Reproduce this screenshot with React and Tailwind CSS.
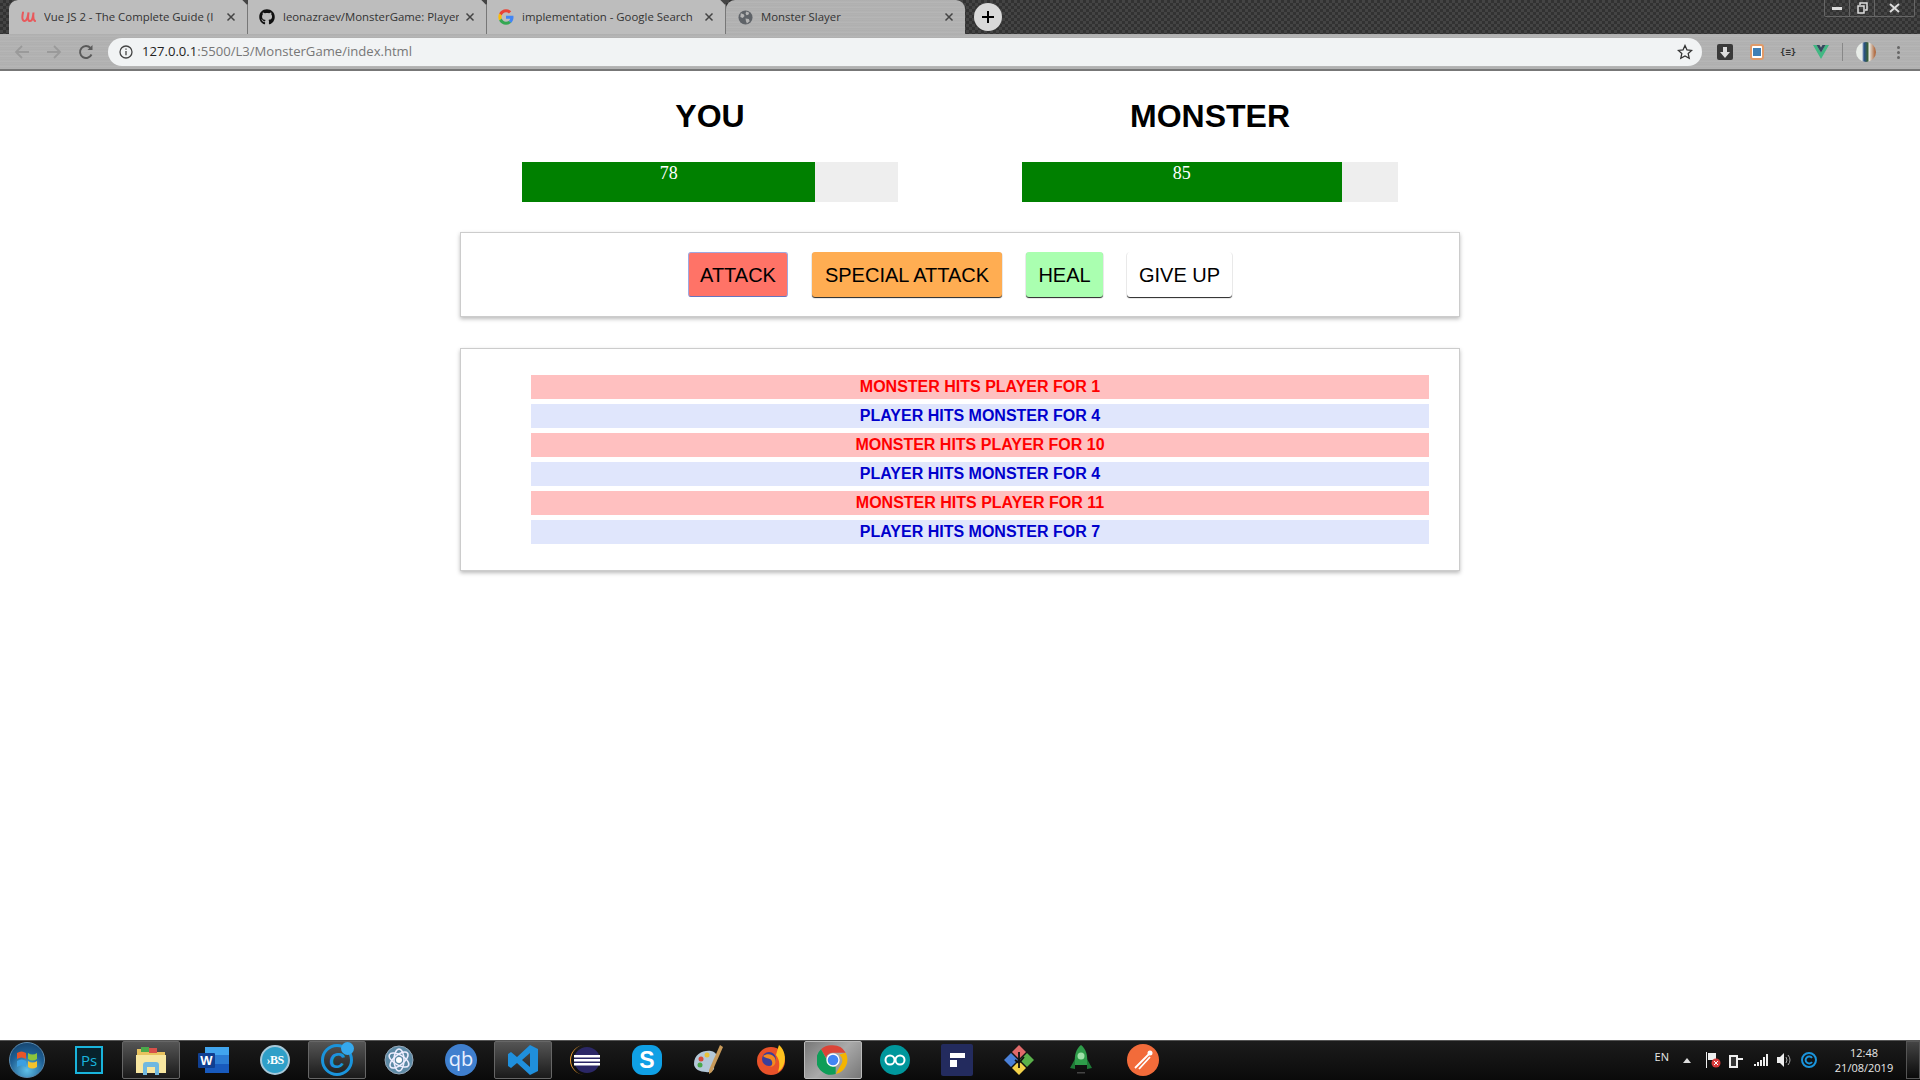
import React from "react";
import { FaGithub } from "react-icons/fa";

const metal = "bg-[repeating-linear-gradient(180deg,#b6b6b6_0px,#a9a9a9_1px,#bcbcbc_2px,#afafaf_3px,#b3b3b3_5px)]";

function Udemy() {
  return <svg width="16" height="16" viewBox="0 0 16 16"><path d="M3 3.500C2 8 2 12 4.500 12S8 7 8.500 3.500C8 8 7.500 12 10 12s3-4 3.500-8.500C13 8 13 11 15 12" fill="none" stroke="#e8595c" strokeWidth="2" strokeLinecap="round" /></svg>;
}
function Google() {
  return (
    <svg width="16" height="16" viewBox="0 0 48 48">
      <path fill="#EA4335" d="M24 10c3.5 0 6.600 1.200 9 3.500l6.700-6.700C35.600 3 30.200 1 24 1 15 1 7.200 6.200 3.400 13.700l7.800 6C13 14.100 18 10 24 10z" />
      <path fill="#4285F4" d="M46.500 24.500c0-1.600-.2-3.100-.4-4.500H24v9h12.700c-.6 2.900-2.200 5.400-4.700 7l7.300 5.700c4.300-4 7.200-9.800 7.200-17.200z" />
      <path fill="#FBBC05" d="M11.200 28.300A14 14 0 0 1 10.500 24c0-1.500.3-3 .7-4.300l-7.800-6A23 23 0 0 0 1 24c0 3.700.9 7.200 2.400 10.300l7.800-6z" />
      <path fill="#34A853" d="M24 47c6.200 0 11.400-2 15.300-5.500L32 35.800c-2 1.400-4.700 2.200-8 2.200-6 0-11-4.100-12.800-9.700l-7.800 6C7.200 41.800 15 47 24 47z" />
    </svg>
  );
}
function Globe() {
  return (
    <svg width="15" height="15" viewBox="0 0 16 16">
      <circle cx="8" cy="8" r="7.500" fill="#5f6368" />
      <path d="M3 3.500l3 1 1 2-2 2-2.500-1zM9 1.500l3 1.500-1 2-2 .5-1-2zM8 9l3.500.5 1 2.500-3 2.500-1-2.500z" fill="#b4b4b4" />
    </svg>
  );
}
function CloseX() {
  return <svg width="10" height="10" viewBox="0 0 10 10"><path d="M1.500 1.500l7 7M8.500 1.500l-7 7" stroke="#444" strokeWidth="1.500" /></svg>;
}

function Tab({ icon, title, active }) {
  return (
    <div className={`relative flex h-[34px] w-[239px] shrink-0 items-center pl-[11px] pr-[8px] ${active ? "rounded-t-[9px]" : "border-r border-[#777] bg-[#bdbdbd] first:rounded-tl-[9px]"}`}>
      <div className="flex w-[16px] shrink-0 justify-center">{icon}</div>
      <div className="ml-[8px] w-[176px] overflow-hidden whitespace-nowrap text-[11.4px] text-[#333] [font-family:'Open_Sans',sans-serif]">{title}</div>
      <div className="ml-auto flex w-[16px] justify-center"><CloseX /></div>
      {!active && <div className="absolute right-[-4px] top-[-5px] h-[8px] w-[8px] rotate-45 bg-[#444]" />}
    </div>
  );
}

function TabStrip() {
  return (
    <div className="flex h-[34px] items-start bg-[#3a3a3a] bg-[repeating-conic-gradient(#323232_0_25%,#444444_0_50%)] bg-[length:6px_6px] pl-[9px]">
      <Tab icon={<Udemy />} title="Vue JS 2 - The Complete Guide (I" />
      <Tab icon={<FaGithub className="text-[16px] text-[#111]" />} title="leonazraev/MonsterGame: Player" />
      <Tab icon={<Google />} title="implementation - Google Search" />
      <div className={`w-[239px] rounded-t-[9px] ${metal}`}><Tab active icon={<Globe />} title="Monster Slayer" /></div>
      <div className="ml-[9px] mt-[3px] flex h-[28px] w-[28px] items-center justify-center rounded-full bg-[#d9d9d9]">
        <svg width="14" height="14" viewBox="0 0 14 14"><path d="M7 1v12M1 7h12" stroke="#000" strokeWidth="2" /></svg>
      </div>
      <div className="ml-auto mr-[5px] flex h-[17px] w-[91px] items-center rounded-b-[2px] border border-t-0 border-[#666] text-[#ddd]">
        <div className="flex h-full w-[25px] items-center justify-center border-r border-[#666]"><div className="h-[3px] w-[10px] bg-[#ddd]" /></div>
        <div className="flex h-full w-[25px] items-center justify-center border-r border-[#666]">
          <svg width="11" height="12" viewBox="0 0 11 12" fill="none" stroke="#ddd" strokeWidth="1.500"><rect x="1" y="4" width="6" height="7" /><path d="M3 3V1h7v7H8" /></svg>
        </div>
        <div className="flex h-full flex-1 items-center justify-center">
          <svg width="11" height="10" viewBox="0 0 11 10"><path d="M1 1l9 8M10 1L1 9" stroke="#ddd" strokeWidth="2" /></svg>
        </div>
      </div>
    </div>
  );
}

function NavButtons() {
  return (
    <div className="flex w-[108px] shrink-0 items-center pl-[14px]">
      <svg width="16" height="16" viewBox="0 0 16 16" fill="none" stroke="#9a9a9a" strokeWidth="1.800"><path d="M15 8H2M8 2L2 8l6 6" /></svg>
      <svg className="ml-[16px]" width="16" height="16" viewBox="0 0 16 16" fill="none" stroke="#9a9a9a" strokeWidth="1.800"><path d="M1 8h13M8 2l6 6-6 6" /></svg>
      <svg className="ml-[16px]" width="16" height="16" viewBox="0 0 16 16" fill="none" stroke="#5a5a5a" strokeWidth="1.900"><path d="M13.500 10.500A6 6 0 1 1 12.500 4" /><path d="M14.500 1v5h-5" fill="#5a5a5a" stroke="none" /></svg>
    </div>
  );
}

function Toolbar() {
  return (
    <div className={`flex h-[37px] items-center border-b-2 border-[#777] pt-[1px] ${metal}`}>
      <NavButtons />
      <div className="flex h-[28px] w-[1594px] items-center rounded-full bg-[#f1f3f4] pl-[11px] pr-[9px]">
        <svg width="14" height="14" viewBox="0 0 14 14" fill="none" stroke="#444" strokeWidth="1.300"><circle cx="7" cy="7" r="6" /><path d="M7 6v4.200M7 3.500v1.300" /></svg>
        <div className="ml-[9px] whitespace-nowrap text-[13.100px] text-[#777] [font-family:'Open_Sans',sans-serif]"><span className="text-[#222]">127.0.0.1</span>:5500/L3/MonsterGame/index.html</div>
        <svg className="ml-auto" width="16" height="16" viewBox="0 0 16 16" fill="none" stroke="#333" strokeWidth="1.300"><path d="M8 1.500l2 4.400 4.700.5-3.500 3.200 1 4.700L8 11.900l-4.200 2.400 1-4.700L1.300 6.400 6 5.900z" /></svg>
      </div>
      <div className="flex flex-1 items-center pl-[15px]">
        <div className="flex h-[16px] w-[16px] items-center justify-center rounded-[2px] bg-[#3a3a3a]">
          <svg width="10" height="11" viewBox="0 0 10 11"><path d="M3 0h4v5h3l-5 6-5-6h3z" fill="#ddd" /></svg>
        </div>
        <div className="ml-[17px] flex h-[16px] w-[14px] items-center justify-center rounded-[3px] border-2 border-[#e09a68] bg-white">
          <div className="h-[8px] w-[8px] bg-[#3f7fb5]" />
        </div>
        <div className="ml-[16px] w-[15px] text-center text-[9px] font-bold leading-none text-[#333] [font-family:'DejaVu_Sans_Mono',monospace]">{"{≡}"}</div>
        <svg className="ml-[18px]" width="16" height="14" viewBox="0 0 16 14"><path d="M0 0h3.500L8 7.500 12.500 0H16L8 14z" fill="#41b883" /><path d="M3.500 0h3L8 2.500 9.500 0h3L8 7.500z" fill="#35495e" /></svg>
        <div className="ml-[13px] h-[18px] w-px bg-[#888]" />
        <div className="ml-[13px] h-[20px] w-[20px] overflow-hidden rounded-full bg-[linear-gradient(90deg,#e8ede8_0%,#e8ede8_30%,#27508a_40%,#3a6030_60%,#e8ede8_65%,#b06a40_95%)]" />
        <div className="ml-[21px] flex flex-col gap-[2px]">
          <div className="h-[3px] w-[3px] rounded-full bg-[#666]" />
          <div className="h-[3px] w-[3px] rounded-full bg-[#666]" />
          <div className="h-[3px] w-[3px] rounded-full bg-[#666]" />
        </div>
      </div>
    </div>
  );
}

function Fighter({ name, value }) {
  return (
    <div className="flex w-[500px] flex-col items-center">
      <h1 className="text-[32px] font-bold leading-[37px] text-black">{name}</h1>
      <div className="mt-[27px] h-[40px] w-[376px] bg-[#eeeeee]">
        <div className="h-full bg-[#008000] text-center text-[18px] leading-[22px] text-white [font-family:'Liberation_Serif',serif]" style={{ width: `${value}%` }}>{value}</div>
      </div>
    </div>
  );
}

const card = "w-[1000px] border border-[#cccccc] bg-white shadow-[0_2px_4px_#bbbbbb]";

function GameButton({ label, className }) {
  return <button className={`h-[45px] rounded-[3px] text-[20px] text-black ${className}`}>{label}</button>;
}

const log = [
  ["MONSTER HITS PLAYER FOR 1", true],
  ["PLAYER HITS MONSTER FOR 4", false],
  ["MONSTER HITS PLAYER FOR 10", true],
  ["PLAYER HITS MONSTER FOR 4", false],
  ["MONSTER HITS PLAYER FOR 11", true],
  ["PLAYER HITS MONSTER FOR 7", false],
];

function Game() {
  return (
    <main className="flex flex-1 flex-col items-center bg-white pt-[27px] [font-family:'Liberation_Sans',Arial,sans-serif]">
      <div className="flex w-[1000px]">
        <Fighter name="YOU" value={78} />
        <Fighter name="MONSTER" value={85} />
      </div>
      <div className={`mt-[30px] flex h-[85px] items-start justify-center gap-[24px] pt-[19px] ${card}`}>
        <GameButton label="ATTACK" className="w-[100px] border border-[#a0a8e0] border-b-[#6575c0] bg-[#ff7367]" />
        <GameButton label="SPECIAL ATTACK" className="w-[190px] bg-[#ffad52] shadow-[0_1px_1px_#222]" />
        <GameButton label="HEAL" className="w-[77px] bg-[#aaffb0] shadow-[0_1px_1px_#222]" />
        <GameButton label="GIVE UP" className="w-[105px] bg-white shadow-[0_1px_1px_#222]" />
      </div>
      <div className={`mt-[31px] h-[223px] pl-[70px] pr-[30px] pt-[26px] ${card}`}>
        <ul className="flex flex-col gap-[5px]">
          {log.map(([text, monster], i) => (
            <li key={i} className={`h-[24px] text-center text-[16px] font-bold leading-[24px] ${monster ? "bg-[#ffc0c0] text-[#ff0000]" : "bg-[#e0e6fc] text-[#0000cc]"}`}>{text}</li>
          ))}
        </ul>
      </div>
    </main>
  );
}

const Icons = {
  start: (
    <div className="flex h-[36px] w-[36px] items-center justify-center rounded-full border border-[#5a8ab0] bg-[radial-gradient(circle_at_50%_80%,#5fc0e8,#1e5f94_55%,#123a60)]">
      <svg width="22" height="20" viewBox="0 0 22 20">
        <path d="M1 3c3-2 6-2 9 0v6C7 7 4 7 1 9z" fill="#e8552a" />
        <path d="M12 3c3 2 6 2 9 0v6c-3 2-6 2-9 0z" fill="#8cc43c" />
        <path d="M1 11c3-2 6-2 9 0v6c-3-2-6-2-9 0z" fill="#3c9fe0" />
        <path d="M12 11c3 2 6 2 9 0v6c-3 2-6 2-9 0z" fill="#f5c32c" />
      </svg>
    </div>
  ),
  ps: (
    <div className="flex h-[28px] w-[28px] items-center justify-center border-2 border-[#19b4dc] bg-[#07222c] text-[15px] leading-none text-[#19b4dc] [font-family:'Open_Sans',sans-serif]">Ps</div>
  ),
  folder: (
    <svg width="32" height="32" viewBox="0 0 32 32">
      <path d="M2 5h10l2 3h16v20H2z" fill="#e8c25e" />
      <rect x="6" y="3" width="8" height="5" fill="#4aa84a" />
      <rect x="14" y="4" width="8" height="5" fill="#d8504a" />
      <path d="M1 11h30v18H1z" fill="#f7e6a0" />
      <path d="M8 31V21q0-3 3-3h10q3 0 3 3v10h-4v-8h-8v8z" fill="#6fb8e0" />
    </svg>
  ),
  word: (
    <svg width="32" height="32" viewBox="0 0 32 32">
      <rect x="8" y="3" width="24" height="8" fill="#41a5ee" />
      <rect x="8" y="11" width="24" height="9" fill="#2b7cd3" />
      <rect x="8" y="20" width="24" height="9" fill="#185abd" />
      <rect x="1" y="9" width="17" height="15" rx="1" fill="#103f91" />
      <text x="9.500" y="21" fontSize="13" fontWeight="700" fill="#fff" textAnchor="middle" fontFamily="Liberation Sans">W</text>
    </svg>
  ),
  bs: (
    <div className="flex h-[30px] w-[30px] items-center justify-center rounded-full border-2 border-[#a8c8d8] bg-[#2f9fc8] text-[12px] font-bold tracking-[-0.5px] text-white [font-family:'Liberation_Serif',serif]">›BS</div>
  ),
  c: (
    <div className="relative flex h-[32px] w-[32px] items-center justify-center rounded-full border-[3px] border-[#1a94dc] text-[22px] font-bold italic text-[#1a94dc] [font-family:'Liberation_Sans',sans-serif]">
      C
      <div className="absolute right-[-4px] top-[-5px] h-[13px] w-[13px] rounded-full bg-[#35a8ec]" />
    </div>
  ),
  atom: (
    <svg width="30" height="30" viewBox="0 0 30 30" fill="none">
      <circle cx="15" cy="15" r="14" fill="#5d8aa5" stroke="#9ab" />
      <ellipse cx="15" cy="15" rx="11" ry="5" stroke="#eef" strokeWidth="1.500" transform="rotate(30 15 15)" />
      <ellipse cx="15" cy="15" rx="11" ry="5" stroke="#eef" strokeWidth="1.500" transform="rotate(-40 15 15)" />
      <ellipse cx="15" cy="15" rx="11" ry="5" stroke="#eef" strokeWidth="1.500" transform="rotate(90 15 15)" />
      <circle cx="15" cy="15" r="3" fill="#fff" />
    </svg>
  ),
  qb: (
    <div className="flex h-[32px] w-[32px] items-center justify-center rounded-full bg-[#3f7fce] pb-[3px] text-[20px] leading-none text-[#e8f0ff] [font-family:'Open_Sans',sans-serif]">qb</div>
  ),
  vscode: (
    <svg width="32" height="32" viewBox="0 0 32 32">
      <path d="M23 1l8 4v22l-8 4-13-12-6 5-3-2V10l3-2 6 5zM23 9l-8 7 8 7z" fill="#1f8fdc" />
    </svg>
  ),
  eclipse: (
    <svg width="32" height="32" viewBox="0 0 32 32">
      <path d="M16 1A15 15 0 0 0 16 31 14 15 0 0 1 16 1z" fill="#f3a030" />
      <circle cx="18" cy="16" r="13" fill="#2b2766" />
      <rect x="5" y="11" width="26" height="2.500" fill="#fff" />
      <rect x="5" y="15" width="26" height="2.500" fill="#fff" />
      <rect x="5" y="19" width="26" height="2.500" fill="#fff" />
    </svg>
  ),
  skype: (
    <div className="flex h-[30px] w-[30px] items-center justify-center rounded-[11px] bg-[#0fa0e5] text-[23px] font-bold leading-none text-white [font-family:'Liberation_Sans',sans-serif]">S</div>
  ),
  palette: (
    <svg width="34" height="32" viewBox="0 0 32 32">
      <path d="M1 20C1 10 10 6 18 7c6 1 7 6 4 9-2 2-3 4-1 7 1 3-3 6-8 5C7 28 1 25 1 20z" fill="#b4c8d8" />
      <circle cx="8" cy="15" r="2.500" fill="#d84a3a" />
      <circle cx="14" cy="11" r="2.500" fill="#e8c23a" />
      <circle cx="7" cy="21" r="2.500" fill="#4aa84a" />
      <path d="M27 1l3 2-11 25-3 2 0-4z" fill="#c89a5a" />
    </svg>
  ),
  firefox: (
    <svg width="32" height="32" viewBox="0 0 32 32">
      <circle cx="16" cy="17" r="14" fill="#e8522a" />
      <path d="M24 1c6 5 7 13 5 19-1 3-3 6-6 8 2-6 2-12-2-17 1-4 2-7 3-10z" fill="#ffc21f" />
      <circle cx="14" cy="15" r="7" fill="#3a3f9a" />
      <path d="M8 12c4-3 10-2 12 2 2 5-1 9-5 9 3-2 3-6 0-8-2-1-5-1-7-3z" fill="#f58a1f" />
    </svg>
  ),
  chrome: (
    <svg width="32" height="32" viewBox="0 0 48 48">
      <path d="M24 2a22 22 0 0 1 19 11H24a11 11 0 0 0-10.500 7.500L6 8A22 22 0 0 1 24 2z" fill="#db4437" />
      <path d="M43 13a22 22 0 0 1-15 32l9.500-17A11 11 0 0 0 33 16z" fill="#f4b400" />
      <path d="M6 8l9.500 17A11 11 0 0 0 28 34l-0 11A22 22 0 0 1 6 8z" fill="#0f9d58" />
      <circle cx="24" cy="24" r="10" fill="#fff" />
      <circle cx="24" cy="24" r="8" fill="#4285f4" />
    </svg>
  ),
  arduino: (
    <svg width="30" height="30" viewBox="0 0 30 30" fill="none">
      <circle cx="15" cy="15" r="15" fill="#00979c" />
      <circle cx="10" cy="15" r="4.500" stroke="#fff" strokeWidth="2" />
      <circle cx="20" cy="15" r="4.500" stroke="#fff" strokeWidth="2" />
    </svg>
  ),
  flag: (
    <svg width="32" height="32" viewBox="0 0 32 32">
      <rect width="32" height="32" rx="2" fill="#232b5e" />
      <path d="M9 9h15v5H9zM9 16h7v7H9z" fill="#fff" />
    </svg>
  ),
  diamonds: (
    <svg width="32" height="32" viewBox="0 0 32 32">
      <path d="M16 1l7 7-7 7-7-7z" fill="#e06a6a" />
      <path d="M8 9l7 7-7 7-7-7z" fill="#4a80d8" />
      <path d="M24 9l7 7-7 7-7-7z" fill="#5ab04a" />
      <path d="M16 17l7 7-7 7-7-7z" fill="#f3d24a" />
      <path d="M16 8v16M12 16l4 3 5-6" stroke="#111" strokeWidth="1.800" fill="none" />
    </svg>
  ),
  rocket: (
    <svg width="30" height="32" viewBox="0 0 30 32">
      <path d="M15 1c5 4 7 10 6 20H9C8 11 10 5 15 1z" fill="#2f9c4a" />
      <circle cx="15" cy="12" r="3.500" fill="#9fe0a8" />
      <path d="M9 15L4 24l5 1zM21 15l5 9-5 1z" fill="#1e7a36" />
      <rect x="11" y="28" width="8" height="1.500" fill="#444" />
    </svg>
  ),
  postman: (
    <svg width="32" height="32" viewBox="0 0 32 32" fill="none">
      <circle cx="16" cy="16" r="16" fill="#f26b3a" />
      <path d="M8 24L22 10M12 25l11-12" stroke="#fff" strokeWidth="1.800" />
      <circle cx="23" cy="9" r="2.500" fill="#fff" />
    </svg>
  ),
};

function TaskIcon({ icon, state, first }) {
  const hl = state === "on"
    ? "border border-[#666] bg-[linear-gradient(180deg,#555,#1a1a1a)]"
    : state === "active"
      ? "border border-[#bbb] bg-[linear-gradient(135deg,#777,#aaa_50%,#777)]"
      : "";
  return (
    <div className={`flex shrink-0 justify-center ${first ? "w-[58px] pr-[4px]" : "w-[62px]"}`}>
      <div className={`flex h-[38px] w-[58px] items-center justify-center rounded-[2px] ${hl}`}>{icon}</div>
    </div>
  );
}

function Tray() {
  return (
    <div className="flex h-full items-center text-[#e8e8e8] [font-family:'Open_Sans',sans-serif]">
      <div className="mb-[5px] text-[11px]">EN</div>
      <svg className="ml-[14px]" width="8" height="5" viewBox="0 0 8 5"><path d="M0 5l4-5 4 5z" fill="#ddd" /></svg>
      <svg className="ml-[14px]" width="16" height="16" viewBox="0 0 16 16"><path d="M1 0h1v16H1zM3 1h8v7H3z" fill="#eee" /><circle cx="11" cy="11" r="4.500" fill="#d83a3a" /><path d="M9 9l4 4M13 9l-4 4" stroke="#fff" /></svg>
      <svg className="ml-[8px]" width="14" height="16" viewBox="0 0 14 16"><path d="M0 3h9v13H0zM9 6h5v2H9z" fill="#eee" /><path d="M2 5h5v9H2z" fill="#333" /></svg>
      <svg className="ml-[11px]" width="14" height="12" viewBox="0 0 14 12"><path d="M0 10h2v2H0zM3 8h2v4H3zM6 6h2v6H6zM9 3h2v9H9zM12 0h2v12h-2z" fill="#eee" /></svg>
      <svg className="ml-[9px]" width="15" height="14" viewBox="0 0 15 14" fill="none"><path d="M0 4h3l4-4v14l-4-4H0z" fill="#eee" /><path d="M9 4q2 3 0 6M11 2q4 5 0 10" stroke="#aaa" /></svg>
      <svg className="ml-[9px]" width="16" height="16" viewBox="0 0 16 16" fill="none"><circle cx="8" cy="8" r="7" stroke="#1a94dc" strokeWidth="2" /><path d="M11 6a3.500 3.500 0 1 0 0 4" stroke="#1a94dc" strokeWidth="2" /></svg>
      <div className="ml-[11px] flex w-[72px] flex-col items-center text-[11px] leading-[15px]">
        <div>12:48</div>
        <div>21/08/2019</div>
      </div>
      <div className="ml-[6px] h-[38px] w-[14px] border border-[#555] bg-[linear-gradient(180deg,#444,#0a0a0a)]" />
    </div>
  );
}

function Taskbar() {
  const items = [
    ["start"], ["ps"], ["folder", "on"], ["word"], ["bs"], ["c", "on"], ["atom"], ["qb"], ["vscode", "on"], ["eclipse"],
    ["skype"], ["palette"], ["firefox"], ["chrome", "active"], ["arduino"], ["flag"], ["diamonds"], ["rocket"], ["postman"],
  ];
  return (
    <div className="flex h-[40px] items-center justify-between border-t border-[#555] bg-[linear-gradient(180deg,#1c1c1c,#0a0a0a)] pb-[1px]">
      <div className="flex items-center">
        {items.map(([k, s], i) => <TaskIcon key={k} icon={Icons[k]} state={s} first={i === 0} />)}
      </div>
      <Tray />
    </div>
  );
}

export default function App() {
  return (
    <div className="flex h-[1080px] w-[1920px] flex-col overflow-hidden bg-white">
      <TabStrip />
      <Toolbar />
      <Game />
      <Taskbar />
    </div>
  );
}
